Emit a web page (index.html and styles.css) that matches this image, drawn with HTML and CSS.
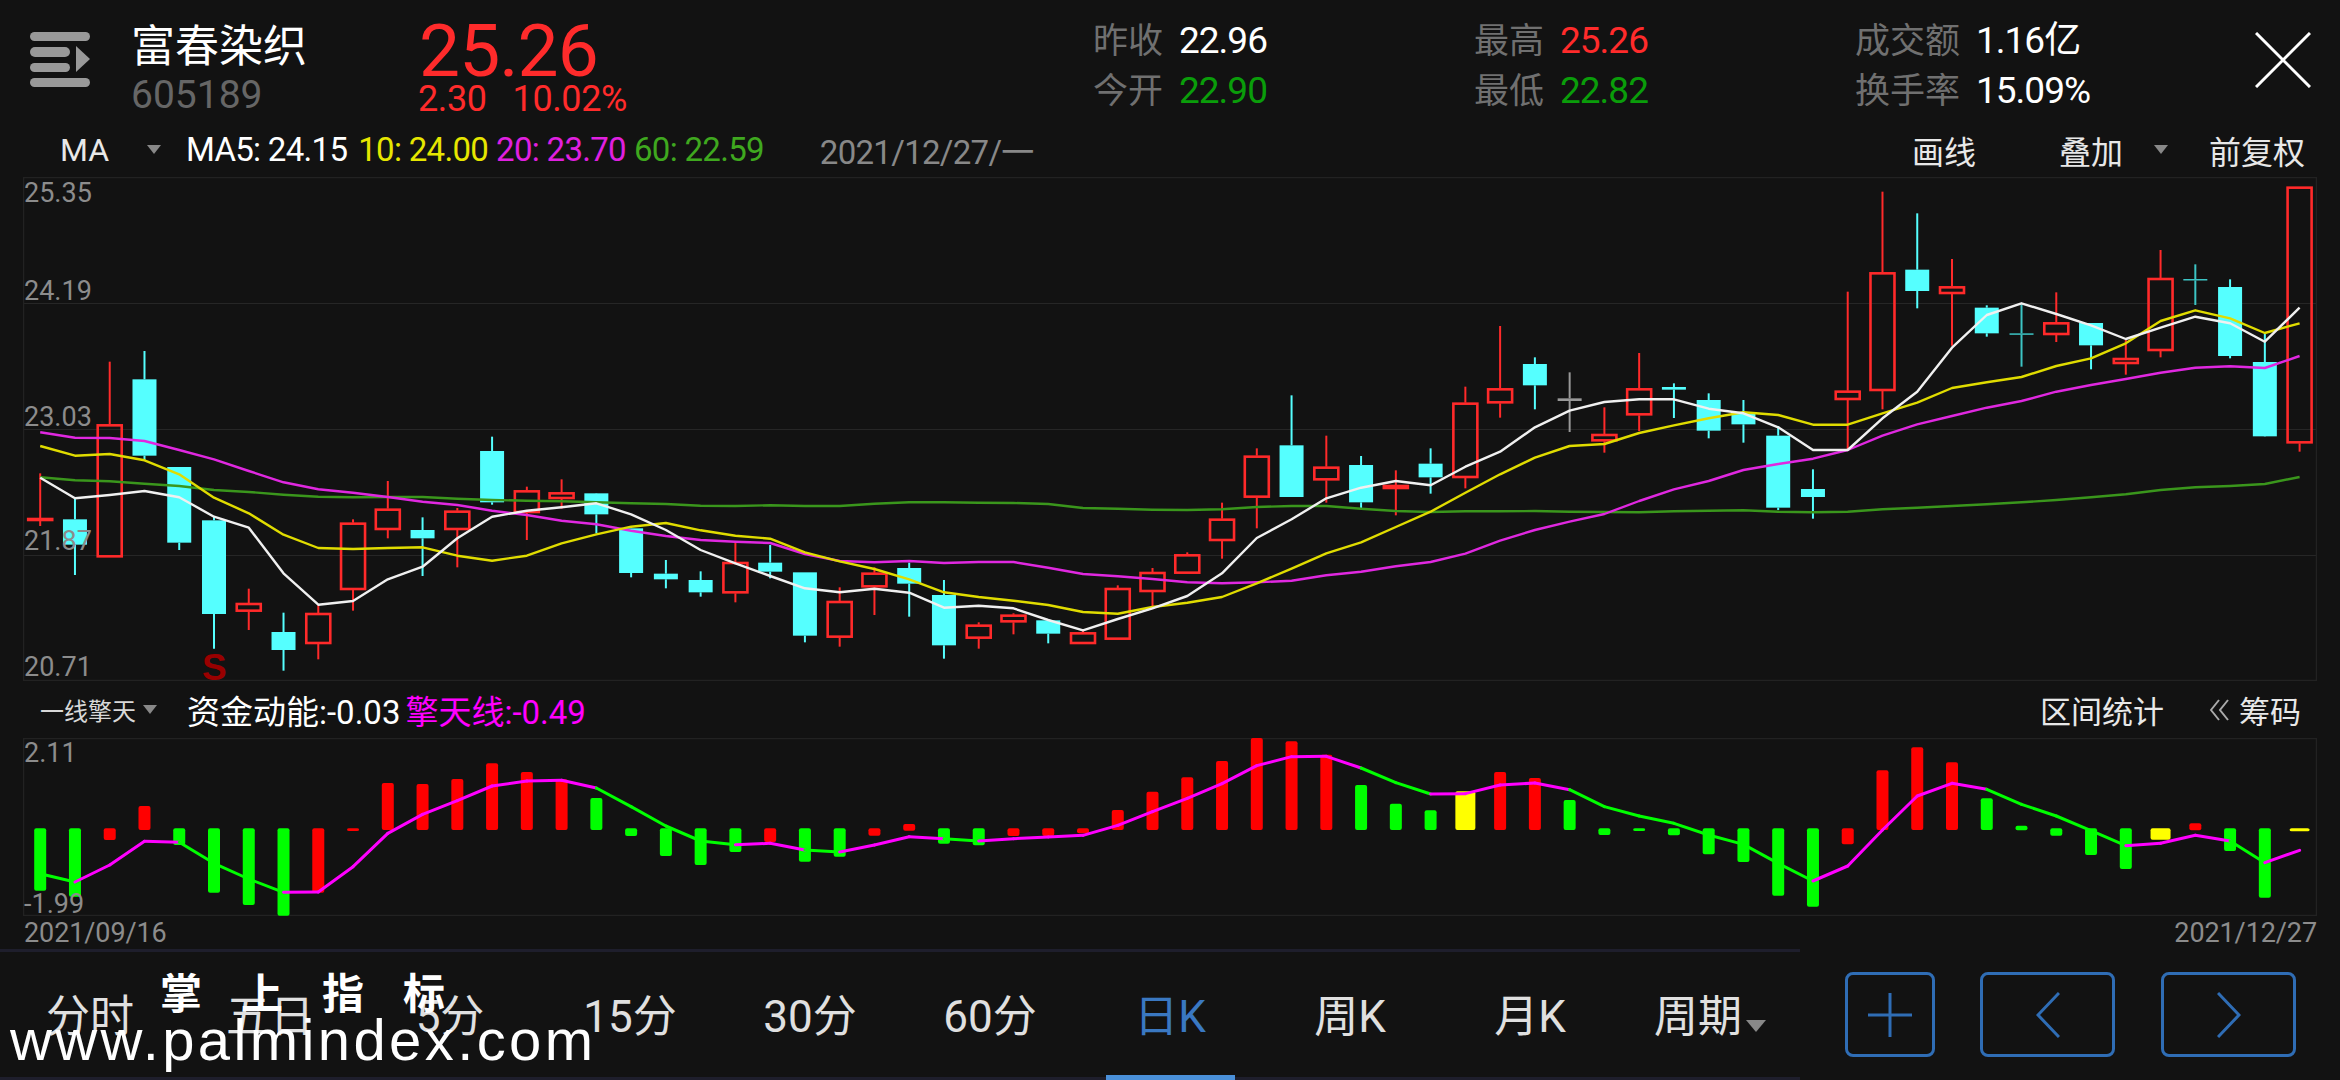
FILE: index.html
```html
<!DOCTYPE html>
<html lang="zh-CN">
<head>
  <meta charset="UTF-8">
  <title>富春染织 605189 日K</title>
  <link rel="stylesheet" href="styles.css">
</head>
<body>
<div class="app">

  <!-- 顶部行情 -->
  <header class="top">
    <svg class="menu-icon" width="60" height="56" viewBox="0 0 60 56">
      <rect x="0" y="0" width="60" height="9" rx="4.5"/>
      <rect x="0" y="15" width="40" height="10" rx="5"/>
      <rect x="0" y="31" width="40" height="9" rx="4.5"/>
      <rect x="0" y="46" width="60" height="9" rx="4.5"/>
      <path d="M46 14 L60 27 L46 40 Z"/>
    </svg>
    <div class="stock">
      <div class="stock-name">富春染织</div>
      <div class="stock-code">605189</div>
    </div>
    <div class="quote">
      <div class="quote-price">25.26</div>
      <div class="quote-change"><span>2.30</span><span>10.02%</span></div>
    </div>
    <div class="stat-group">
      <div class="stat"><span class="stat-label">昨收</span><span class="white">22.96</span></div>
      <div class="stat"><span class="stat-label">今开</span><span class="green">22.90</span></div>
    </div>
    <div class="stat-group">
      <div class="stat"><span class="stat-label">最高</span><span class="red">25.26</span></div>
      <div class="stat"><span class="stat-label">最低</span><span class="green">22.82</span></div>
    </div>
    <div class="stat-group stat-group-wide">
      <div class="stat"><span class="stat-label">成交额</span><span class="white">1.16亿</span></div>
      <div class="stat"><span class="stat-label">换手率</span><span class="white">15.09%</span></div>
    </div>
    <svg class="close-icon" width="56" height="56" viewBox="0 0 56 56">
      <path d="M1 1 L55 55 M55 1 L1 55"/>
    </svg>
  </header>

  <!-- 均线工具条 -->
  <div class="bar ma-bar">
    <span class="ma-select">MA</span>
    <i class="caret ma-caret"></i>
    <span class="ma-item ma5">MA5: 24.15</span>
    <span class="ma-item ma10">10: 24.00</span>
    <span class="ma-item ma20">20: 23.70</span>
    <span class="ma-item ma60">60: 22.59</span>
    <span class="ma-date">2021/12/27/一</span>
    <div class="bar-right">
      <span class="tool-draw">画线</span>
      <span class="tool-add">叠加</span>
      <i class="caret tool-caret"></i>
      <span>前复权</span>
    </div>
  </div>

  <!-- K线主图 -->
  <div class="panel panel-main">
    <svg id="kline" class="chart" viewBox="23 177 2294 504"></svg>
    <span class="axis axis-1">25.35</span>
    <span class="axis axis-2">24.19</span>
    <span class="axis axis-3">23.03</span>
    <span class="axis axis-4">21.87</span>
    <span class="axis axis-5">20.71</span>
    <span class="sell-mark">S</span>
  </div>

  <!-- 副图工具条 -->
  <div class="bar sub-bar">
    <span class="sub-select">一线擎天</span>
    <i class="caret sub-caret"></i>
    <span class="sub-value white">资金动能:-0.03</span>
    <span class="sub-value magenta">擎天线:-0.49</span>
    <div class="bar-right">
      <span class="tool-range">区间统计</span>
      <svg class="chip-icon" width="20" height="22" viewBox="0 0 20 22">
        <path d="M9 1 L1 11 L9 21 M18 1 L10 11 L18 21"/>
      </svg>
      <span>筹码</span>
    </div>
  </div>

  <!-- 副图 -->
  <div class="panel panel-sub">
    <svg id="macd" class="chart" viewBox="23 738 2294 178"></svg>
    <span class="axis axis-top">2.11</span>
    <span class="axis axis-bottom">-1.99</span>
  </div>
  <div class="date-row">
    <span>2021/09/16</span>
    <span>2021/12/27</span>
  </div>

  <!-- 底部周期 -->
  <nav class="nav">
    <div class="tabs">
      <div class="tab">分时</div>
      <div class="tab">五日</div>
      <div class="tab">5分</div>
      <div class="tab">15分</div>
      <div class="tab">30分</div>
      <div class="tab">60分</div>
      <div class="tab active">日K</div>
      <div class="tab">周K</div>
      <div class="tab">月K</div>
      <div class="tab">周期<i class="caret tab-caret"></i></div>
    </div>
    <div class="nav-buttons">
      <button class="btn btn-plus">
        <svg width="44" height="44" viewBox="0 0 44 44"><path d="M0 22 H44 M22 0 V44"/></svg>
      </button>
      <button class="btn btn-arrow">
        <svg width="24" height="46" viewBox="0 0 24 46"><path d="M23 1 L2 23 L23 45"/></svg>
      </button>
      <button class="btn btn-arrow">
        <svg width="24" height="46" viewBox="0 0 24 46"><path d="M1 1 L22 23 L1 45"/></svg>
      </button>
    </div>
  </nav>

  <!-- 水印 -->
  <div class="mark-cn"><span>掌</span><span>上</span><span>指</span><span>标</span></div>
  <div class="mark-url">www.palmindex.com</div>
</div>
<script src="chart.js"></script>
</body>
</html>
```

FILE: styles.css
```css
* { margin: 0; padding: 0; box-sizing: border-box; }
html, body { background: #121212; }
body { width: 2340px; height: 1080px; overflow: hidden; font-family: Roboto, "Noto Sans CJK SC", sans-serif; color: #e4e4e4; }
.app { position: relative; width: 2340px; height: 1080px; display: flex; flex-direction: column; }

.white { color: #fff; }
.red { color: #ff2b2b; }
.green { color: #0a9d0a; }
.magenta { color: #ff00ff; }

.caret { display: inline-block; width: 0; height: 0; border-left: 7px solid transparent; border-right: 7px solid transparent; border-top: 9px solid #888; }

/* top */
.top { height: 118px; flex: none; display: flex; padding-left: 30px; position: relative; }
.menu-icon { margin-top: 32px; fill: #999; flex: none; }
.stock { margin-left: 41px; width: 289px; flex: none; padding-top: 22px; }
.stock-name { font-size: 44px; line-height: 50px; color: #fff; }
.stock-code { font-size: 39px; line-height: 42px; color: #666; margin-top: 2px; }
.quote { width: 673px; flex: none; color: #ff2b2b; }
.quote-price { font-size: 73px; line-height: 72px; margin-top: 15px; letter-spacing: -0.9px; margin-left: -1px; }
.quote-change { font-size: 36px; line-height: 38px; margin-top: -7px; display: flex; gap: 26px; letter-spacing: -0.4px; margin-left: -2px; }
.stat-group { width: 381px; flex: none; padding-top: 17px; font-size: 37px; letter-spacing: -1px; }
.stat-group-wide { width: 400px; }
.stat { height: 50px; line-height: 48px; display: flex; align-items: baseline; gap: 16px; }
.stat-label { color: #707070; font-size: 35px; letter-spacing: 0; }
.close-icon { margin-top: 32px; stroke: #fff; stroke-width: 3; flex: none; }

/* tool bars */
.bar { flex: none; display: flex; align-items: center; position: relative; }
.bar-right { margin-left: auto; display: flex; align-items: center; color: #e8e8e8; }
.ma-bar { height: 59px; font-size: 32px; padding-top: 4px; }
.ma-select { margin-left: 60px; width: 87px; color: #e8e8e8; }
.ma-caret { margin-right: 25px; }
.ma-item { margin-right: 8px; font-size: 33px; letter-spacing: -0.7px; white-space: nowrap; }
.ma5 { color: #fff; margin-right: 11px; }
.ma10 { color: #e6e600; }
.ma20 { color: #e020e0; }
.ma60 { color: #3fa81f; }
.ma-date { margin-left: 48px; color: #888; font-size: 33px; letter-spacing: -0.7px; }
.ma-bar .bar-right { padding-right: 35px; }
.tool-draw { margin-right: 83px; }
.tool-caret { margin: 0 41px 0 31px; }

/* panels */
.panel { position: relative; margin-left: 23px; width: 2294px; flex: none; }
.panel-main { height: 504px; }
.panel-sub { height: 178px; }
.chart { display: block; width: 100%; height: 100%; }
.axis { position: absolute; left: 1px; font-size: 27px; line-height: 30px; color: #8c8c8c; }
.axis-1 { top: 1px; }
.axis-2 { top: 99px; }
.axis-3 { top: 225px; }
.axis-4 { top: 349px; }
.axis-5 { top: 475px; }
.axis-top { top: 0; }
.axis-bottom { top: 151px; }
.sell-mark { position: absolute; left: 179px; top: 471px; font: bold 37px/40px "Liberation Sans", sans-serif; color: #9a0000; }

.sub-bar { height: 57px; }
.sub-select { margin-left: 40px; width: 103px; font-size: 24px; color: #d8d8d8; }
.sub-caret { margin-right: 30px; }
.sub-value { font-size: 33px; margin-right: 5px; white-space: nowrap; }
.sub-bar .bar-right { padding-right: 39px; font-size: 31px; }
.tool-range { margin-right: 46px; }
.chip-icon { margin-right: 9px; fill: none; stroke: #aaa; stroke-width: 2; }

.date-row { height: 33px; margin: 0 23px 0 24px; flex: none; display: flex; justify-content: space-between; font-size: 27px; line-height: 35px; color: #8c8c8c; letter-spacing: -0.1px; }

/* bottom */
.nav { flex: none; height: 131px; display: flex; }
.tabs { width: 1800px; display: flex; border-top: 3px solid #1e1e2c; border-bottom: 3px solid #1e1e2c; }
.tab { position: relative; width: 180px; height: 125px; padding-top: 3px; font-size: 44px; line-height: 124px; text-align: center; color: #e0e0e0; white-space: nowrap; }
.tab.active { color: #3a78c2; }
.tab.active::after { content: ""; position: absolute; left: 26px; right: 25px; bottom: -3px; height: 5px; background: #4a90d9; }
.tab-caret { margin-left: 4px; vertical-align: 0; border-left-width: 10px; border-right-width: 10px; border-top-width: 12px; }
.nav-buttons { flex: 1; display: flex; padding: 23px 0 0 45px; }
.btn { height: 85px; background: none; border: 3px solid #2f6db5; border-radius: 8px; display: flex; align-items: center; justify-content: center; }
.btn svg { fill: none; stroke: #2f6db5; stroke-width: 3; }
.btn-plus { width: 90px; margin-right: 45px; }
.btn-arrow { width: 135px; margin-right: 46px; }

/* watermark */
.mark-cn { position: absolute; left: 160px; top: 970px; display: flex; gap: 39px; font-size: 42px; line-height: 50px; font-weight: 700; color: #fff; }
.mark-url { position: absolute; left: 10px; top: 1007px; font: 58px/66px "Liberation Sans", sans-serif; letter-spacing: 3.4px; color: #fff; white-space: nowrap; }
```

FILE: chart.js
```js
// x of bar i, both charts share it
const X0 = 40.2, STEP = 34.76;
const xAt = i => X0 + i * STEP;
// data below is read in units of 1/3 px from the chart origin
const yMain = v => 170 + v / 3;
const ySub = v => 680 + v / 3;
const NS = 'http://www.w3.org/2000/svg';

function add(svg, tag, attrs) {
  const el = document.createElementNS(NS, tag);
  for (const k in attrs) el.setAttribute(k, attrs[k]);
  svg.appendChild(el);
}

// type, wick top, body top, body bottom, wick bottom
const candles = [
  ['r',910,1044,1052,1068],['c',985,1048,1124,1215],['r',575,763,1162,1162],['c',543,628,857,870],
  ['c',891,891,1118,1140],['c',1040,1051,1332,1436],['r',1256,1299,1325,1380],['c',1328,1386,1440,1502],
  ['r',1305,1329,1422,1468],['r',1048,1058,1260,1322],['r',933,1016,1080,1105],['c',1042,1080,1105,1218],
  ['r',1014,1022,1080,1192],['c',800,843,997,1004],['r',950,961,1029,1110],['r',928,967,987,1016],
  ['c',969,970,1033,1090],['c',1075,1075,1209,1222],['c',1170,1211,1228,1255],['c',1204,1230,1267,1280],
  ['r',1115,1176,1270,1297],['c',1125,1178,1205,1225],['c',1207,1207,1397,1417],['r',1252,1293,1403,1430],
  ['r',1192,1208,1252,1335],['c',1178,1194,1241,1340],['c',1230,1275,1426,1466],['r',1357,1364,1406,1436],
  ['r',1330,1334,1357,1393],['c',1351,1351,1391,1420],['r',1377,1387,1422,1422],['r',1246,1254,1409,1409],
  ['r',1194,1206,1266,1310],['r',1147,1153,1211,1211],['r',998,1046,1113,1166],['r',835,857,983,1075],
  ['c',676,826,981,981],['r',797,890,931,998],['c',858,885,997,1015],['r',901,945,957,1036],
  ['c',835,881,922,971],['r',650,698,924,955],['r',468,655,700,743],['c',562,582,646,718],
  ['g',607,685,693,786],['r',712,792,814,848],['r',549,655,736,783],['c',640,651,659,744],
  ['c',670,690,782,805],['c',690,728,763,818],['c',768,797,1013,1020],['c',898,957,981,1046],
  ['r',365,662,690,840],['r',65,307,663,718],['c',130,299,363,415],['r',267,349,372,527],
  ['c',406,413,490,500],['d',403,490,494,590],['r',367,457,495,516],['c',459,459,526,598],
  ['r',510,564,582,614],['r',240,324,543,562],['d',283,327,331,405],['c',328,351,558,565],
  ['c',490,576,799,800],['r',50,50,820,845]
];

const ma5 = [923,985,975,963,982,1040,1073,1210,1304,1293,1228,1190,1105,1040,1022,1012,1000,1033,1080,1140,1180,1218,1255,1267,1256,1268,1313,1307,1315,1350,1381,1347,1315,1278,1210,1104,1048,985,953,933,946,890,845,772,722,696,688,688,716,730,772,840,840,745,665,533,435,400,432,466,507,473,440,460,515,413];
const ma10 = [828,857,852,871,913,983,1030,1094,1134,1137,1134,1132,1157,1172,1157,1120,1093,1070,1059,1081,1097,1106,1147,1174,1197,1228,1267,1281,1292,1305,1326,1331,1311,1298,1281,1240,1196,1150,1117,1071,1025,968,913,863,828,822,789,766,745,727,735,764,764,730,698,654,637,621,588,565,520,453,421,445,489,460];
const ma20 = [787,803,804,813,840,868,903,937,958,968,981,995,1005,1022,1035,1052,1063,1082,1098,1110,1115,1119,1152,1173,1177,1173,1179,1176,1176,1193,1212,1219,1227,1237,1240,1237,1232,1216,1205,1189,1176,1151,1112,1080,1055,1032,993,958,933,900,882,866,840,797,763,738,713,693,665,645,627,608,593,589,594,558];
const ma60 = [922,931,934,941,948,960,966,974,980,982,981,981,986,990,992,994,997,1000,1002,1007,1008,1006,1008,1008,1001,997,997,998,999,1002,1014,1016,1019,1020,1018,1011,1008,1008,1016,1023,1026,1024,1024,1023,1025,1026,1027,1024,1022,1021,1025,1027,1025,1018,1013,1008,1003,997,990,982,973,960,952,948,942,921];

const COLORS = { r: '#ff2a2a', c: '#55ffff', g: '#999999', d: '#3cc4c4' };
const kline = document.getElementById('kline');

// grid and frame
[303.5, 429.5, 555.5].forEach(y => add(kline, 'line', { x1: 23, x2: 2317, y1: y, y2: y, stroke: '#262626', 'stroke-width': 1 }));
add(kline, 'rect', { x: 23.5, y: 177.5, width: 2293, height: 503, fill: 'none', stroke: '#222', 'stroke-width': 1.5 });

candles.forEach((c, i) => {
  const [type, wt, bt, bb, wb] = c;
  const x = xAt(i), color = COLORS[type];
  const top = yMain(bt), bottom = yMain(bb);
  add(kline, 'line', { x1: x, x2: x, y1: yMain(wt), y2: top, stroke: color, 'stroke-width': 2 });
  add(kline, 'line', { x1: x, x2: x, y1: bottom, y2: yMain(wb), stroke: color, 'stroke-width': 2 });
  if (type === 'r') {
    add(kline, 'rect', { x: x - 12, y: top + 1, width: 24, height: Math.max(bottom - top - 2, 1), fill: 'none', stroke: color, 'stroke-width': 2.6 });
  } else {
    add(kline, 'rect', { x: x - 12, y: top, width: 24, height: Math.max(bottom - top, 1.5), fill: color });
  }
});

function maLine(data, color) {
  const pts = data.map((v, i) => xAt(i).toFixed(1) + ',' + yMain(v).toFixed(1)).join(' ');
  add(kline, 'polyline', { points: pts, fill: 'none', stroke: color, 'stroke-width': 2.4, 'stroke-linejoin': 'round' });
}
maLine(ma60, '#3a961c');
maLine(ma20, '#e028e0');
maLine(ma10, '#e0dc00');
maLine(ma5, '#f0f0f0');

// 副图: colour, top, bottom
const bars = [
  ['g',445,632],['g',445,650],['r',445,480],['r',378,450],['g',445,495],['g',445,638],['g',445,675],['g',445,707],
  ['r',445,638],['r',445,453],['r',309,450],['r',312,450],['r',297,450],['r',250,450],['r',276,450],['r',298,450],
  ['g',354,450],['g',445,468],['g',445,528],['g',445,555],['g',445,516],['r',445,486],['g',445,545],['g',445,530],
  ['r',445,467],['r',432,452],['g',445,491],['g',445,496],['r',445,468],['r',445,468],['r',445,460],['r',390,450],
  ['r',335,450],['r',292,450],['r',243,450],['r',174,450],['r',184,450],['r',224,450],['g',315,450],['g',371,450],
  ['g',391,450],['y',334,450],['r',276,450],['r',294,450],['g',360,450],['g',445,465],['g',445,453],['g',445,466],
  ['g',445,523],['g',445,546],['g',445,647],['g',445,680],['r',445,493],['r',271,450],['r',202,450],['r',247,450],
  ['g',355,450],['g',437,451],['g',445,467],['g',445,525],['g',445,567],['y',445,479],['r',430,451],['g',445,513],
  ['g',445,653],['y',445,454]
];
const line = [581,606,555,484,487,550,597,637,636,560,460,403,362,318,303,301,324,380,438,483,494,490,510,516,495,470,476,483,476,471,466,436,395,355,311,257,230,229,264,308,342,341,315,309,329,380,408,430,465,493,550,603,558,450,348,310,328,373,408,452,497,490,466,483,548,511];
// segments leaving these bars are green, the others magenta
const greenSegs = [0,4,5,6,16,17,18,19,22,26,38,39,44,45,46,47,48,49,50,56,57,58,59,63];
const BAR_COLORS = { r: '#ff0000', g: '#00ff00', y: '#ffff00' };

const macd = document.getElementById('macd');
add(macd, 'rect', { x: 23.5, y: 738.5, width: 2293, height: 177, fill: 'none', stroke: '#222', 'stroke-width': 1.5 });

bars.forEach((b, i) => {
  const top = ySub(b[1]), h = Math.max(ySub(b[2]) - top, 2);
  // yellow bars are wider than the rest
  const w = b[0] === 'y' ? 20 : 12;
  add(macd, 'rect', { x: xAt(i) - w / 2, y: top, width: w, height: h, rx: 2, fill: BAR_COLORS[b[0]] });
});

for (let i = 0; i < line.length - 1; i++) {
  add(macd, 'line', {
    x1: xAt(i), y1: ySub(line[i]), x2: xAt(i + 1), y2: ySub(line[i + 1]),
    stroke: greenSegs.includes(i) ? '#00ff00' : '#ff00ff',
    'stroke-width': 3, 'stroke-linecap': 'round'
  });
}
```
